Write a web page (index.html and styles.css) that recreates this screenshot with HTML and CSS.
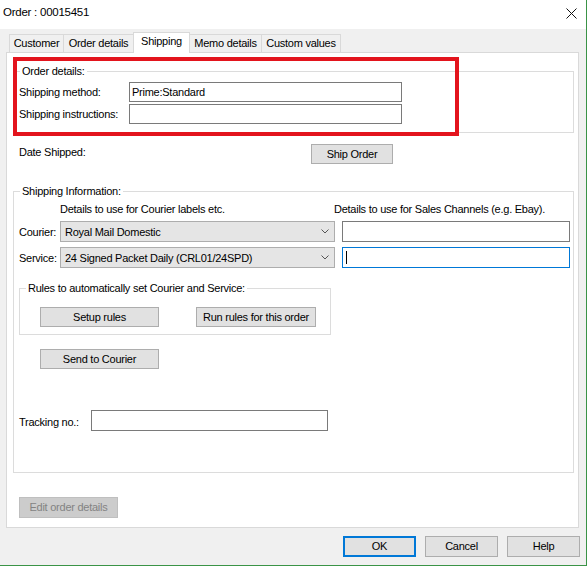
FILE: index.html
```html
<!DOCTYPE html>
<html>
<head>
<meta charset="utf-8">
<title>Order : 00015451</title>
<link rel="stylesheet" href="styles.css">
</head>
<body>
<div class="window">
  <div class="titlebar">
    <span class="title">Order : 00015451</span>
    <svg class="close" width="11" height="11" viewBox="0 0 11 11"><path d="M0.5 0.5L10.5 10.5M10.5 0.5L0.5 10.5" stroke="#111" stroke-width="1" fill="none"/></svg>
  </div>
  <div class="client">
    <div class="tabs">
      <div class="tab t-customer">Customer</div>
      <div class="tab t-order">Order details</div>
      <div class="tab active t-shipping">Shipping</div>
      <div class="tab t-memo">Memo details</div>
      <div class="tab t-custom">Custom values</div>
    </div>
    <div class="panel">
      <fieldset class="group order-group">
        <legend>Order details:</legend>
        <div class="row">
          <span class="lbl-order">Shipping method:</span>
          <div class="textbox tb-order">Prime:Standard</div>
        </div>
        <div class="row">
          <span class="lbl-order">Shipping instructions:</span>
          <div class="textbox tb-order"></div>
        </div>
      </fieldset>
      <div class="highlight"></div>

      <div class="date-row">
        <span class="lbl-date">Date Shipped:</span>
        <div class="btn btn-ship">Ship Order</div>
      </div>

      <fieldset class="group ship-group">
        <legend>Shipping Information:</legend>
        <div class="ship-grid">
          <span class="hdr hdr-courier">Details to use for Courier labels etc.</span>
          <span class="hdr hdr-sales">Details to use for Sales Channels (e.g. Ebay).</span>

          <span class="lbl">Courier:</span>
          <div class="combo"><span>Royal Mail Domestic</span><svg class="chev" width="8" height="5" viewBox="0 0 8 5"><path d="M0.5 0.5L4 4L7.5 0.5" stroke="#555" stroke-width="1" fill="none"/></svg></div>
          <div class="textbox tb-row"></div>

          <span class="lbl">Service:</span>
          <div class="combo"><span>24 Signed Packet Daily (CRL01/24SPD)</span><svg class="chev" width="8" height="5" viewBox="0 0 8 5"><path d="M0.5 0.5L4 4L7.5 0.5" stroke="#555" stroke-width="1" fill="none"/></svg></div>
          <div class="textbox tb-row focused"><span class="caret"></span></div>
        </div>

        <fieldset class="group rules-group">
          <legend>Rules to automatically set Courier and Service:</legend>
          <div class="rules-buttons">
            <div class="btn btn-setup">Setup rules</div>
            <div class="btn btn-run">Run rules for this order</div>
          </div>
        </fieldset>

        <div class="btn btn-send">Send to Courier</div>

        <div class="tracking-row">
          <span class="lbl-track">Tracking no.:</span>
          <div class="textbox tb-track"></div>
        </div>
      </fieldset>

      <div class="btn btn-disabled btn-edit">Edit order details</div>
    </div>

    <div class="dialog-buttons">
      <div class="btn btn-dlg btn-default">OK</div>
      <div class="btn btn-dlg">Cancel</div>
      <div class="btn btn-dlg">Help</div>
    </div>
  </div>
</div>
</body>
</html>
```

FILE: styles.css
```css
* { box-sizing: border-box; }

html, body {
  margin: 0;
  padding: 0;
  background: #ffffff;
}

body {
  font-family: "Liberation Sans", Arial, sans-serif;
  font-size: 11px;
  letter-spacing: -0.25px;
  color: #000;
}

.window {
  width: 587px;
  height: 566px;
  background: #f0f0f0;
  border-right: 1px solid #3a9346;
  border-bottom: 1px solid #3a9346;
  overflow: hidden;
}

.titlebar {
  height: 29px;
  background: #ffffff;
  display: flex;
  justify-content: space-between;
  align-items: flex-start;
  padding-left: 3px;
}

.title {
  font-size: 11.5px;
  line-height: 14px;
  margin-top: 5px;
}

.close {
  margin-top: 8px;
  margin-right: 9px;
}

.client {
  padding: 3px 0 0 6px;
}

/* tabs */
.tabs {
  display: flex;
  align-items: flex-end;
  height: 20px;
  margin-left: 3px;
}

.tab {
  height: 18px;
  line-height: 17px;
  text-align: center;
  white-space: nowrap;
  border-top: 1px solid #d9d9d9;
  border-left: 1px solid #d9d9d9;
  background: #f0f0f0;
}

.tab:last-child { border-right: 1px solid #d9d9d9; }

.tab.active {
  height: 21px;
  line-height: 16px;
  background: #ffffff;
  margin-bottom: -1px;
  position: relative;
  z-index: 1;
  border-right: 1px solid #d9d9d9;
}

.tab.active + .tab { border-left: none; }

.t-customer { width: 54px; }
.t-order { width: 70px; }
.t-shipping { width: 57px; }
.t-memo { width: 71px; }
.t-custom { width: 80px; }

/* panel */
.panel {
  position: relative;
  height: 476px;
  margin-right: 7px;
  background: #ffffff;
  border: 1px solid #d9d9d9;
}

.highlight {
  position: absolute;
  left: 6px;
  top: 4px;
  width: 446px;
  height: 79px;
  border: 4px solid #e3141d;
  pointer-events: none;
}

/* group boxes */
.group {
  border: 1px solid #dcdcdc;
  margin: 0;
  padding: 0;
  min-width: 0;
}

.group legend {
  padding: 0 2px;
  line-height: 13px;
  white-space: nowrap;
}

.order-group {
  margin: 12px 4px 0 6px;
  padding: 4px 0 8px 5px;
}

.order-group > legend,
.ship-group > legend { margin-left: 1px; }

.row {
  display: flex;
  align-items: center;
}

.row + .row { margin-top: 2px; }

.lbl-order {
  width: 110px;
  white-space: nowrap;
}

.textbox {
  height: 20px;
  border: 1px solid #7a7a7a;
  background: #ffffff;
  padding-left: 2px;
  line-height: 18px;
  white-space: nowrap;
}

.tb-order { width: 273px; }

.date-row {
  display: flex;
  align-items: flex-start;
  margin: 11px 0 0 12px;
}

.lbl-date {
  width: 292px;
  line-height: 13px;
  margin-top: 2px;
}

/* buttons */
.btn {
  height: 20px;
  line-height: 18px;
  border: 1px solid #adadad;
  background: #e1e1e1;
  text-align: center;
  white-space: nowrap;
}

.btn-ship { width: 82px; }

.ship-group {
  margin: 21px 4px 0 6px;
  padding: 5px 0 41px 5px;
}

.ship-grid {
  display: grid;
  grid-template-columns: 41px 275px 235px;
  row-gap: 5px;
  align-items: center;
}

.hdr {
  line-height: 13px;
  white-space: nowrap;
}

.hdr-courier { grid-column: 2; }
.hdr-sales { grid-column: 3; margin-left: -1px; }

.lbl { white-space: nowrap; }

.combo {
  height: 21px;
  display: flex;
  align-items: center;
  justify-content: space-between;
  padding: 0 5px 0 4px;
  background: #e5e5e5;
  border: 1px solid #adadad;
  white-space: nowrap;
}

.chev { flex: none; }

.tb-row {
  height: 21px;
  margin-left: 7px;
  display: flex;
  align-items: center;
}

.focused { border-color: #0078d7; }

.caret {
  display: inline-block;
  width: 1px;
  height: 13px;
  background: #000;
  margin-left: 1px;
}

.rules-group {
  width: 312px;
  margin-top: 14px;
  padding: 12px 0 7px 20px;
}

.rules-group > legend { margin-left: -14px; }

.rules-buttons {
  display: flex;
  gap: 37px;
}

.btn-setup { width: 119px; }
.btn-run { width: 120px; }

.btn-send {
  width: 119px;
  margin: 14px 0 0 21px;
}

.tracking-row {
  display: flex;
  align-items: center;
  margin-top: 41px;
}

.lbl-track {
  width: 72px;
  white-space: nowrap;
  padding-top: 2px;
}

.tb-track {
  width: 237px;
  height: 21px;
}

.btn-disabled {
  background: #cccccc;
  border-color: #bfbfbf;
  color: #838383;
}

.btn-edit {
  width: 99px;
  height: 21px;
  line-height: 19px;
  margin: 24px 0 0 12px;
}

.dialog-buttons {
  display: flex;
  justify-content: flex-end;
  gap: 9px;
  margin: 8px 6px 0 0;
}

.btn-dlg {
  width: 73px;
  height: 21px;
  line-height: 19px;
}

.btn-default {
  border: 2px solid #0078d7;
  line-height: 17px;
}
```
